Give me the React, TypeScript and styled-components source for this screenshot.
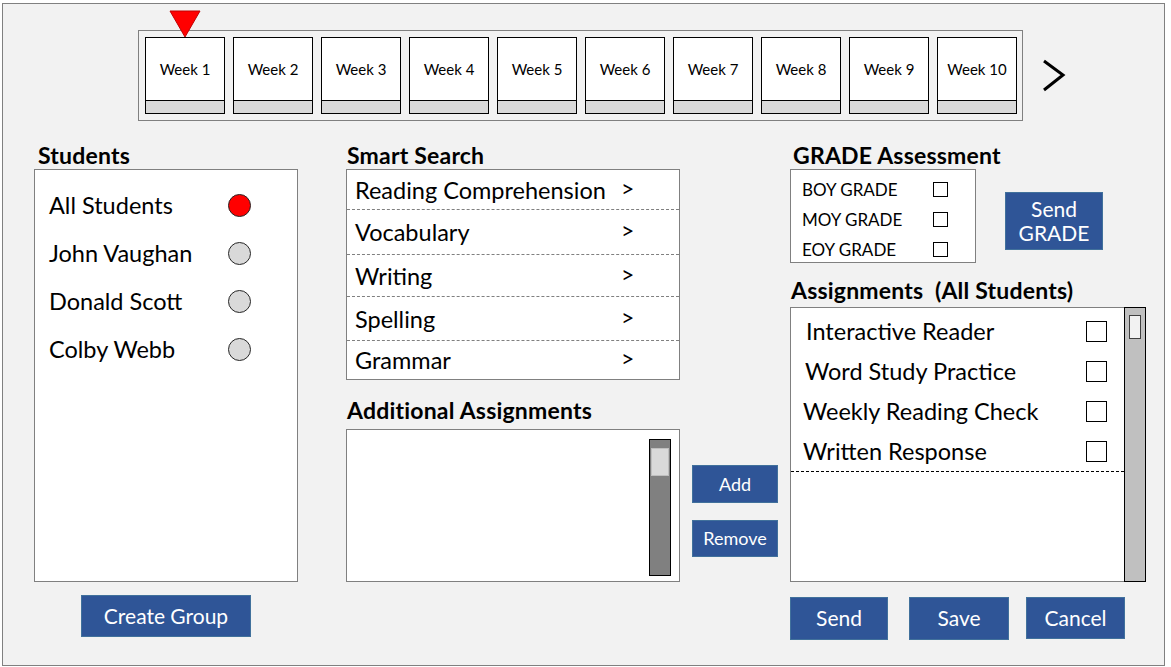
import React from 'react';
import styled, { createGlobalStyle } from 'styled-components';

const GlobalStyle = createGlobalStyle`
  body {
    margin: 0;
    background: #ffffff;
    font-family: Lato, "Open Sans", sans-serif;
    color: #000000;
  }
  * {
    box-sizing: border-box;
  }
`;

const Frame = styled.div`
  margin: 3px 0 0 2px;
  width: 1163px;
  height: 663px;
  border: 1px solid #808080;
  background: #f2f2f2;
  padding-top: 26px;
`;

const TopBar = styled.div`
  display: flex;
  align-items: center;
  margin-left: 135px;
`;

const WeekStrip = styled.div`
  display: flex;
  gap: 8px;
  width: 885px;
  height: 91px;
  border: 1px solid #808080;
  padding: 6px 0 0 6px;
`;

const WeekTab = styled.div`
  position: relative;
  display: flex;
  flex-direction: column;
  width: 80px;
  height: 77px;
`;

const WeekFace = styled.div`
  flex: 1;
  display: flex;
  align-items: center;
  justify-content: center;
  background: #ffffff;
  border: 1px solid #000000;
  font-size: 15px;
`;

const WeekFoot = styled.div`
  height: 13px;
  background: #d9d9d9;
  border: 1px solid #000000;
  border-top: none;
`;

const Marker = styled.svg`
  position: absolute;
  left: 24px;
  top: -27px;
`;

const NextArrow = styled.svg`
  margin-left: 18px;
`;

const Main = styled.div`
  display: flex;
  margin-top: 22px;
  padding-left: 31px;
`;

const Column = styled.div<{ $width: number; $gap?: number; $top?: number }>`
  display: flex;
  flex-direction: column;
  width: ${p => p.$width}px;
  margin-left: ${p => p.$gap ?? 0}px;
  padding-top: ${p => p.$top ?? 0}px;
`;

const Heading = styled.div<{ $indent?: number; $top?: number; $bottom?: number }>`
  height: 26px;
  line-height: 24px;
  font-size: 23px;
  font-weight: 700;
  letter-spacing: 0.2px;
  padding-left: ${p => p.$indent ?? 1}px;
  margin-top: ${p => p.$top ?? 0}px;
  margin-bottom: ${p => p.$bottom ?? 0}px;
  white-space: pre;
`;

const Panel = styled.div<{ $height: number }>`
  height: ${p => p.$height}px;
  background: #ffffff;
  border: 1px solid #808080;
`;

const StudentList = styled(Panel)`
  padding: 11px 0 0 14px;
`;

const StudentRow = styled.div`
  display: grid;
  grid-template-columns: 179px 22px;
  align-items: center;
  height: 48px;
  font-size: 23.5px;
`;

const Radio = styled.span<{ $on?: boolean }>`
  width: 23px;
  height: 23px;
  border-radius: 50%;
  border: 1px solid #262626;
  background: ${p => (p.$on ? '#ff0000' : '#d9d9d9')};
`;

const BlueButton = styled.button<{ $w: number; $h: number; $size?: number }>`
  width: ${p => p.$w}px;
  height: ${p => p.$h}px;
  background: #2f5597;
  border: 1px solid #41719c;
  color: #ffffff;
  font-family: Lato, "Open Sans", sans-serif;
  font-size: ${p => p.$size ?? 21}px;
  line-height: 1.15;
  padding: 0;
`;

const CreateButton = styled(BlueButton)`
  align-self: center;
  margin-top: 13px;
`;

const SearchRow = styled.div<{ $h: number; $last?: boolean }>`
  display: grid;
  grid-template-columns: 266px auto;
  align-items: center;
  height: ${p => p.$h}px;
  padding-left: 8px;
  font-size: 23.5px;
  border-bottom: ${p => (p.$last ? 'none' : '1px dashed #808080')};
`;

const Caret = styled.span`
  font-size: 23px;
  margin-top: -4px;
`;

const ScrollPanel = styled(Panel)`
  display: flex;
  justify-content: flex-end;
  padding: 9px 8px 5px 0;
`;

const Track = styled.div<{ $fill: string }>`
  width: 22px;
  height: 100%;
  background: ${p => p.$fill};
  border: 1px solid #000000;
`;

const DarkThumb = styled.div`
  margin: 8px 1px 0;
  height: 28px;
  background: #d9d9d9;
  border: 1px solid #bfbfbf;
`;

const SideButton = styled(BlueButton)`
  margin-bottom: 17px;
`;

const GradeRow = styled.div`
  display: flex;
`;

const GradeBox = styled(Panel)`
  width: 186px;
  padding: 4px 0 0 11px;
`;

const GradeLine = styled.div`
  display: grid;
  grid-template-columns: 131px 15px;
  align-items: center;
  height: 30px;
  font-size: 17px;
`;

const Check = styled.span<{ $size: number }>`
  width: ${p => p.$size}px;
  height: ${p => p.$size}px;
  border: 1px solid #000000;
  background: #ffffff;
`;

const SendGrade = styled(BlueButton)`
  margin: 23px 0 0 29px;
`;

const AssignBox = styled.div`
  display: flex;
  height: 275px;
`;

const AssignList = styled.div`
  flex: 1;
  background: #ffffff;
  border: 1px solid #808080;
  border-right: none;
  padding-top: 3px;
`;

const AssignItems = styled.div`
  border-bottom: 1px dashed #000000;
`;

const AssignRow = styled.div<{ $indent: number }>`
  display: grid;
  grid-template-columns: ${p => 295 - p.$indent}px 21px;
  align-items: center;
  height: 40px;
  padding-left: ${p => p.$indent}px;
  font-size: 23.5px;
`;

const LightThumb = styled.div`
  margin: 7px 4px 0;
  height: 24px;
  background: #f2f2f2;
  border: 1px solid #404040;
`;

const ActionRow = styled.div`
  display: flex;
  margin-top: 15px;
`;

const ActionButton = styled(BlueButton)<{ $gap?: number }>`
  margin-left: ${p => p.$gap ?? 0}px;
`;

const weeks = Array.from({ length: 10 }, (_, i) => `Week ${i + 1}`);
const students = ['All Students', 'John Vaughan', 'Donald Scott', 'Colby Webb'];
const searches: [string, number][] = [
  ['Reading Comprehension', 40],
  ['Vocabulary', 45],
  ['Writing', 42],
  ['Spelling', 44],
  ['Grammar', 38],
];
const grades = ['BOY GRADE', 'MOY GRADE', 'EOY GRADE'];
const assignments: [string, number][] = [
  ['Interactive Reader', 15],
  ['Word Study Practice', 14],
  ['Weekly Reading Check', 12],
  ['Written Response', 12],
];

export default function App() {
  return (
    <>
      <GlobalStyle />
      <Frame>
        <TopBar>
          <WeekStrip>
            {weeks.map((w, i) => (
              <WeekTab key={w}>
                {i === 0 && (
                  <Marker width="32" height="28" viewBox="0 0 32 28">
                    <polygon points="1,1 31,1 16,27" fill="#ff0000" stroke="#c00000" strokeWidth="1" />
                  </Marker>
                )}
                <WeekFace>{w}</WeekFace>
                <WeekFoot />
              </WeekTab>
            ))}
          </WeekStrip>
          <NextArrow width="26" height="34" viewBox="0 0 26 34">
            <polyline points="3,2 22,16 3,31" fill="none" stroke="#000000" strokeWidth="3" />
          </NextArrow>
        </TopBar>

        <Main>
          <Column $width={264}>
            <Heading $indent={4}>Students</Heading>
            <StudentList $height={413}>
              {students.map((s, i) => (
                <StudentRow key={s}>
                  <span>{s}</span>
                  <Radio $on={i === 0} />
                </StudentRow>
              ))}
            </StudentList>
            <CreateButton $w={170} $h={42}>Create Group</CreateButton>
          </Column>

          <Column $width={334} $gap={48}>
            <Heading>Smart Search</Heading>
            <Panel $height={211}>
              {searches.map(([label, h], i) => (
                <SearchRow key={label} $h={h} $last={i === searches.length - 1}>
                  <span>{label}</span>
                  <Caret>&gt;</Caret>
                </SearchRow>
              ))}
            </Panel>
            <Heading $top={18} $bottom={5}>Additional Assignments</Heading>
            <ScrollPanel $height={153}>
              <Track $fill="#808080">
                <DarkThumb />
              </Track>
            </ScrollPanel>
          </Column>

          <Column $width={86} $gap={12} $top={322}>
            <SideButton $w={86} $h={38} $size={18}>Add</SideButton>
            <SideButton $w={86} $h={37} $size={18}>Remove</SideButton>
          </Column>

          <Column $width={356} $gap={12}>
            <Heading $indent={3}>GRADE Assessment</Heading>
            <GradeRow>
              <GradeBox $height={94}>
                {grades.map(g => (
                  <GradeLine key={g}>
                    <span>{g}</span>
                    <Check $size={15} />
                  </GradeLine>
                ))}
              </GradeBox>
              <SendGrade $w={98} $h={58}>
                Send
                <br />
                GRADE
              </SendGrade>
            </GradeRow>
            <Heading $top={15} $bottom={3}>{'Assignments  (All Students)'}</Heading>
            <AssignBox>
              <AssignList>
                <AssignItems>
                  {assignments.map(([label, indent]) => (
                    <AssignRow key={label} $indent={indent}>
                      <span>{label}</span>
                      <Check $size={21} />
                    </AssignRow>
                  ))}
                </AssignItems>
              </AssignList>
              <Track $fill="#c0c0c0">
                <LightThumb />
              </Track>
            </AssignBox>
            <ActionRow>
              <ActionButton $w={98} $h={43}>Send</ActionButton>
              <ActionButton $w={100} $h={43} $gap={21}>Save</ActionButton>
              <ActionButton $w={99} $h={42} $gap={17}>Cancel</ActionButton>
            </ActionRow>
          </Column>
        </Main>
      </Frame>
    </>
  );
}
